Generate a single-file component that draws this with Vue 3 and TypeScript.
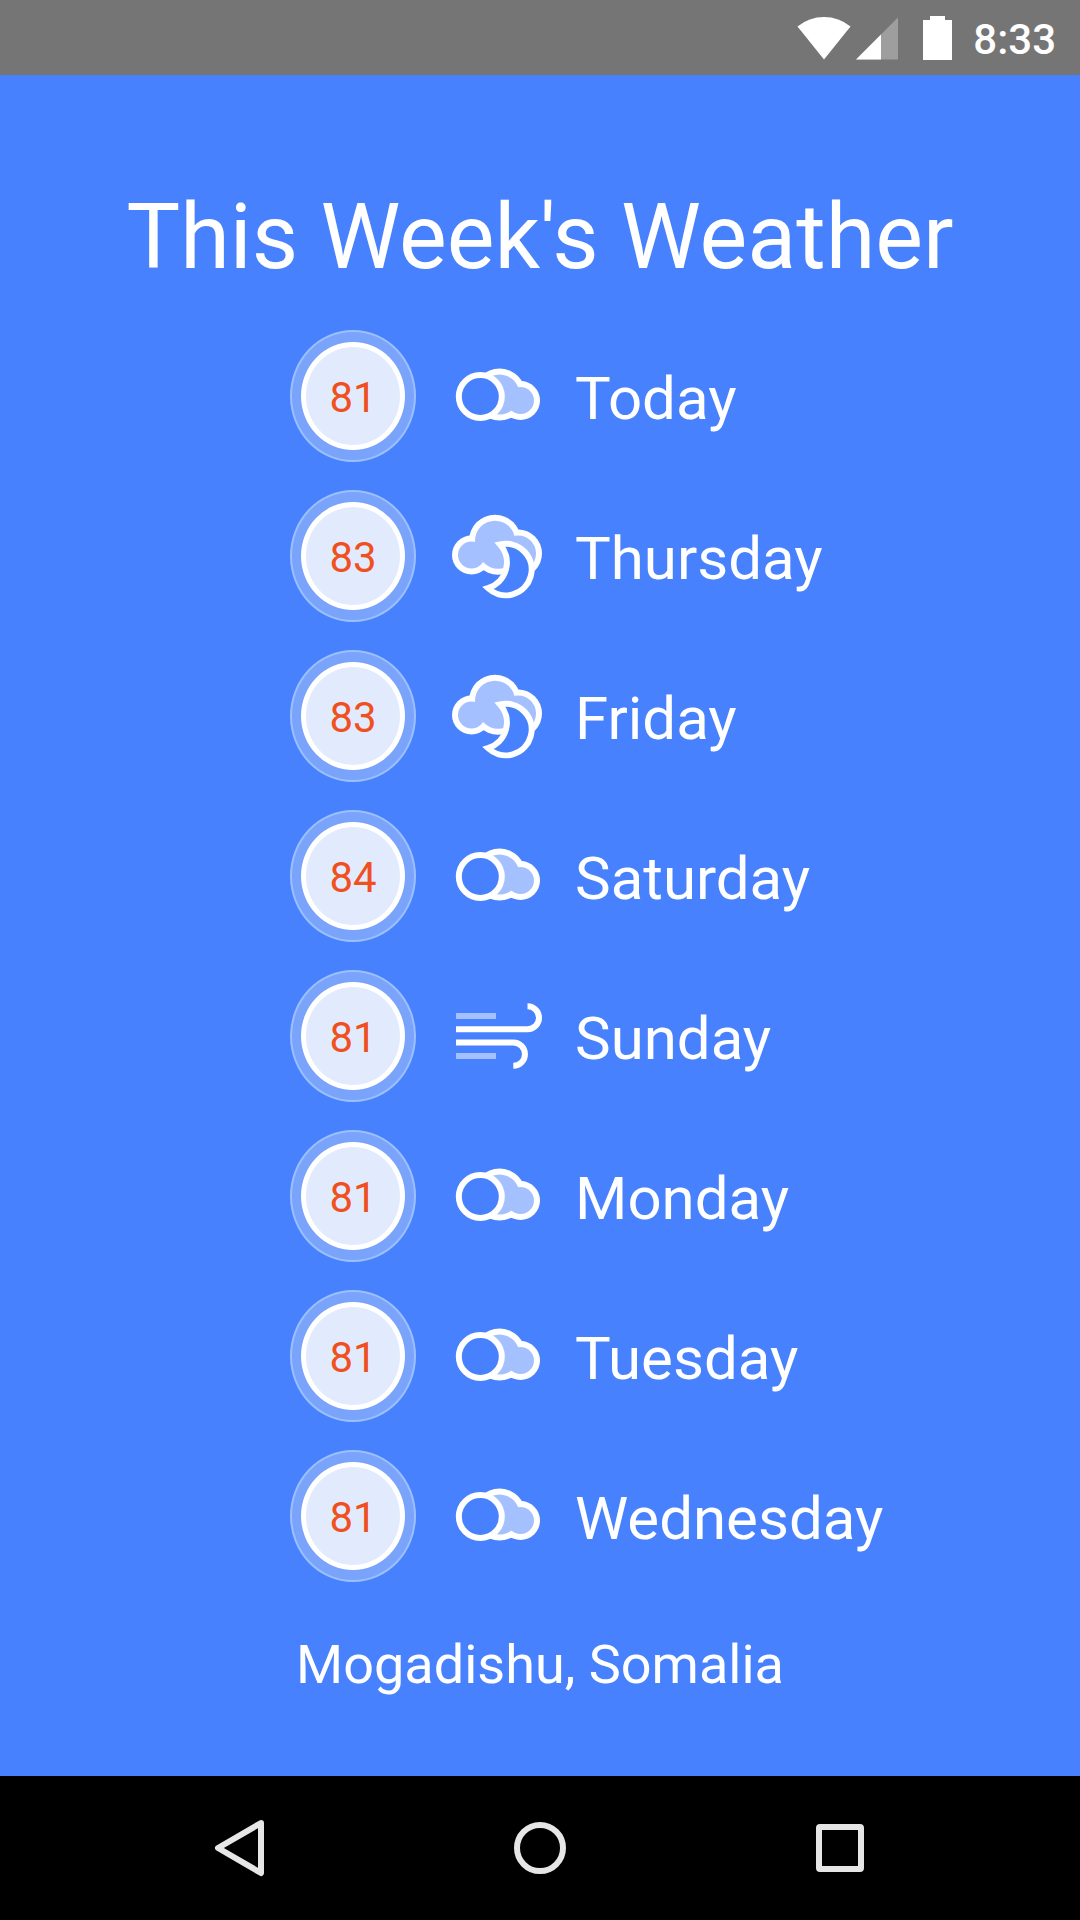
<script setup lang="ts">
type Condition = 'cloudy' | 'night' | 'wind'

interface Forecast {
  day: string
  temp: number
  condition: Condition
}

const week: Forecast[] = [
  { day: 'Today', temp: 81, condition: 'cloudy' },
  { day: 'Thursday', temp: 83, condition: 'night' },
  { day: 'Friday', temp: 83, condition: 'night' },
  { day: 'Saturday', temp: 84, condition: 'cloudy' },
  { day: 'Sunday', temp: 81, condition: 'wind' },
  { day: 'Monday', temp: 81, condition: 'cloudy' },
  { day: 'Tuesday', temp: 81, condition: 'cloudy' },
  { day: 'Wednesday', temp: 81, condition: 'cloudy' },
]
</script>

<template>
  <div class="screen">
    <header class="status">
      <svg class="wifi" width="54" height="44" viewBox="0 0 54 44" aria-hidden="true">
        <path d="M0.5 10.5Q12 1 27 1T53.5 10.5L27 43.5Z" fill="#fff" />
      </svg>
      <svg class="signal" width="42" height="44" viewBox="0 0 42 44" aria-hidden="true">
        <path d="M0 43.5L42 1.5V43.5Z" fill="#fff" fill-opacity="0.3" />
        <path d="M0 43.5L25 18.5V43.5Z" fill="#fff" />
      </svg>
      <svg class="battery" width="29" height="44" viewBox="0 0 29 44" aria-hidden="true">
        <path d="M7 0H22V4H29V44H0V4H7Z" fill="#fff" />
      </svg>
      <time class="clock">8:33</time>
    </header>

    <main class="weather">
      <h1 class="title">This Week's Weather</h1>
      <ul class="days">
        <li v-for="item in week" :key="item.day" class="row">
          <span class="badge"><span class="temp">{{ item.temp }}</span></span>

          <svg v-if="item.condition === 'cloudy'" class="icon" viewBox="0 0 96 100" aria-hidden="true">
            <g fill="#fff">
              <circle cx="51.5" cy="48.5" r="26" />
              <circle cx="72.5" cy="54.5" r="19.5" />
            </g>
            <g fill="#a4c0ff">
              <circle cx="51.5" cy="48.5" r="20" />
              <circle cx="72.5" cy="54.5" r="13.5" />
            </g>
            <circle cx="32.3" cy="50.5" r="21.5" fill="#4781fd" stroke="#fff" stroke-width="6" />
          </svg>

          <svg v-else-if="item.condition === 'night'" class="icon" viewBox="0 0 96 100" aria-hidden="true">
            <g fill="#fff">
              <circle cx="23.5" cy="49" r="19.5" />
              <circle cx="47" cy="34.7" r="26" />
              <circle cx="50" cy="42.7" r="26" />
              <circle cx="70" cy="47.5" r="24" />
            </g>
            <g fill="#a4c0ff">
              <circle cx="23.5" cy="49" r="13.5" />
              <circle cx="47" cy="34.7" r="20" />
              <circle cx="50" cy="42.7" r="20" />
              <circle cx="70" cy="47.5" r="18" />
            </g>
            <path
              d="M52 38.4A25.8 25.8 0 1 1 40 82.2A27 27 0 0 0 52 38.4Z"
              fill="#4781fd"
              stroke="#fff"
              stroke-width="6"
              stroke-miterlimit="10"
            />
          </svg>

          <svg v-else class="icon" viewBox="0 4 96 100" aria-hidden="true">
            <path d="M8 34H48M8 74H48" stroke="#a4c0ff" stroke-width="6" />
            <path
              d="M8 47.2H79.5A11.5 11.5 0 0 0 79.5 24.2M8 60.5H65.3A11.6 11.6 0 0 1 65.3 83.8"
              fill="none"
              stroke="#fff"
              stroke-width="6"
            />
          </svg>

          <span class="day">{{ item.day }}</span>
        </li>
      </ul>
      <p class="place">Mogadishu, Somalia</p>
    </main>

    <nav class="nav">
      <button type="button" aria-label="Back">
        <svg width="60" height="60" viewBox="0 0 60 60">
          <path d="M51 5L8 30L51 55Z" />
        </svg>
      </button>
      <button type="button" aria-label="Home">
        <svg width="60" height="60" viewBox="0 0 60 60">
          <circle cx="30" cy="30" r="23" />
        </svg>
      </button>
      <button type="button" aria-label="Recent apps">
        <svg width="60" height="60" viewBox="0 0 60 60">
          <rect x="9" y="9" width="42" height="42" rx="1" />
        </svg>
      </button>
    </nav>
  </div>
</template>

<style>
body {
  margin: 0;
  background: #4781fd;
}
</style>

<style scoped>
.screen {
  display: flex;
  flex-direction: column;
  min-height: 100vh;
  background: #4781fd;
  color: #fff;
  font-family: Roboto, 'Liberation Sans', sans-serif;
}

.status {
  display: flex;
  align-items: center;
  justify-content: flex-end;
  box-sizing: border-box;
  height: 75px;
  padding-right: 24px;
  background: #757575;
}

.signal {
  margin-left: 5px;
}

.battery {
  margin-left: 25px;
}

.clock {
  margin-left: 21px;
  padding-top: 4px;
  font-size: 42px;
  font-weight: 500;
  line-height: 50px;
}

.weather {
  flex: 1;
  padding-top: 110px;
}

.title {
  margin: 0 0 39px;
  font-size: 90px;
  font-weight: 400;
  line-height: 106px;
  text-align: center;
}

.days {
  display: flex;
  flex-direction: column;
  gap: 28px;
  margin: 0;
  padding: 0 0 0 calc(50% - 250px);
  list-style: none;
}

.row {
  display: flex;
  align-items: center;
}

.badge {
  display: flex;
  box-sizing: border-box;
  width: 126px;
  height: 132px;
  padding: 10px 9px;
  border: 2px solid #9cc0fd;
  border-radius: 50%;
  background: #7aa3fb;
}

.temp {
  display: flex;
  flex: 1;
  align-items: center;
  justify-content: center;
  padding-top: 4px;
  border: 5px solid #fff;
  border-radius: 50%;
  background: #e2ebfe;
  color: #f0501e;
  font-size: 42px;
  line-height: 50px;
}

.icon {
  width: 96px;
  height: 100px;
  margin: 0 31px 0 32px;
}

.day {
  padding-top: 6px;
  font-size: 60px;
  line-height: 70px;
  white-space: nowrap;
}

.place {
  margin: 51px 0;
  font-size: 54px;
  line-height: 64px;
  text-align: center;
}

.nav {
  display: flex;
  align-items: center;
  justify-content: center;
  gap: 180px;
  height: 144px;
  background: #000;
}

.nav button {
  display: flex;
  align-items: center;
  justify-content: center;
  width: 120px;
  height: 120px;
  padding: 0;
  border: 0;
  background: none;
}

.nav svg {
  fill: none;
  stroke: #e6e6e6;
  stroke-width: 6;
  stroke-linejoin: round;
}
</style>
